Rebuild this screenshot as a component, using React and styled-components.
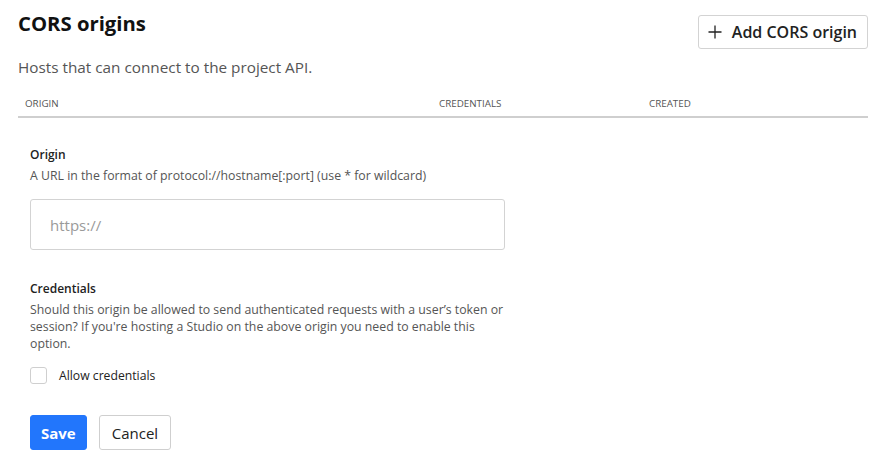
import styled, { createGlobalStyle } from "styled-components";
import { useState } from "react";

const GlobalStyle = createGlobalStyle`
  body {
    margin: 0;
    background: #fff;
    font-family: "Open Sans", "Noto Sans", sans-serif;
    color: #1a1a1a;
  }
`;

const PlusIcon = () => (
  <svg width="16" height="16" viewBox="0 0 16 16" fill="none">
    <path d="M8 1.5v13M1.5 8h13" stroke="#222" strokeWidth="1.3" />
  </svg>
);

const App = () => {
  const [allow, setAllow] = useState(false);
  return (
    <>
      <GlobalStyle />
      <Page>
        <Header>
          <TitleBlock>
            <Title>CORS origins</Title>
            <Subtitle>Hosts that can connect to the project API.</Subtitle>
          </TitleBlock>
          <AddButton>
            <PlusIcon />
            Add CORS origin
          </AddButton>
        </Header>
        <TableHead>
          <HeadCell>Origin</HeadCell>
          <HeadCell>Credentials</HeadCell>
          <HeadCell>Created</HeadCell>
        </TableHead>
        <Form>
          <Field>
            <Label>Origin</Label>
            <Help>
              A URL in the format of protocol://hostname[:port] (use * for
              wildcard)
            </Help>
            <TextInput type="text" placeholder="https://" />
          </Field>
          <Field>
            <Label>Credentials</Label>
            <Help>
              Should this origin be allowed to send authenticated requests with
              a user’s token or session? If you're hosting a Studio on the above
              origin you need to enable this option.
            </Help>
            <CheckRow>
              <Check
                type="checkbox"
                checked={allow}
                onChange={(e) => setAllow(e.target.checked)}
              />
              Allow credentials
            </CheckRow>
          </Field>
          <Actions>
            <Button $primary>Save</Button>
            <Button>Cancel</Button>
          </Actions>
        </Form>
      </Page>
    </>
  );
};
export default App;

const Page = styled.div`
  padding: 8px 27px 0 18px;
`;

const Header = styled.div`
  display: flex;
  justify-content: space-between;
  align-items: flex-start;
`;

const TitleBlock = styled.div`
  display: flex;
  flex-direction: column;
`;

const Title = styled.h1`
  margin: 0;
  font-size: 20.3px;
  font-weight: 700;
  line-height: 30px;
  color: #111;
`;

const Subtitle = styled.p`
  margin: 19px 0 0;
  font-size: 15.3px;
  line-height: 20px;
  color: #555;
`;

const AddButton = styled.button`
  margin-top: 7px;
  display: flex;
  align-items: center;
  gap: 9px;
  height: 34px;
  padding: 0 10px 0 8px;
  background: #fff;
  border: 1px solid #d3d3d3;
  border-radius: 3px;
  font-family: inherit;
  font-size: 16px;
  font-weight: 600;
  color: #222;
`;

const TableHead = styled.div`
  display: grid;
  grid-template-columns: 414px 210px 1fr;
  margin-top: 20px;
  padding: 0 7px 5px;
  border-bottom: 2px solid #cfcfcf;
`;

const HeadCell = styled.div`
  font-size: 9.8px;
  line-height: 14px;
  text-transform: uppercase;
  color: #555;
`;

const Form = styled.div`
  padding: 28px 12px 0;
  width: 475px;
  display: flex;
  flex-direction: column;
`;

const Field = styled.div`
  display: flex;
  flex-direction: column;
  margin-bottom: 30px;
`;

const Label = styled.div`
  font-size: 12px;
  font-weight: 600;
  line-height: 17px;
  color: #222;
`;

const Help = styled.div`
  margin-top: 4px;
  font-size: 12.3px;
  line-height: 17px;
  color: #555;
`;

const TextInput = styled.input`
  margin-top: 15px;
  height: 51px;
  box-sizing: border-box;
  padding: 0 19px;
  border: 1px solid #d3d3d3;
  border-radius: 3px;
  font-family: inherit;
  font-size: 15px;
  color: #222;
  &::placeholder {
    color: #9a9a9a;
  }
`;

const CheckRow = styled.label`
  margin-top: 15px;
  display: flex;
  align-items: center;
  gap: 12px;
  font-size: 12.2px;
  color: #222;
`;

const Check = styled.input`
  appearance: none;
  margin: 0;
  width: 17px;
  height: 17px;
  border: 1px solid #cfcfcf;
  border-radius: 3px;
  background: #fff;
  &:checked {
    background: #2276fc;
    border-color: #2276fc;
  }
`;

const Actions = styled.div`
  display: flex;
  gap: 12px;
  margin-top: 1px;
`;

const Button = styled.button`
  height: 35px;
  padding: 0 ${(p) => (p.$primary ? 10 : 12)}px;
  border-radius: 3px;
  font-family: inherit;
  font-size: 15px;
  font-weight: ${(p) => (p.$primary ? 700 : 500)};
  background: ${(p) => (p.$primary ? "#2276fc" : "#fff")};
  color: ${(p) => (p.$primary ? "#fff" : "#222")};
  border: 1px solid ${(p) => (p.$primary ? "#2276fc" : "#cfcfcf")};
`;
